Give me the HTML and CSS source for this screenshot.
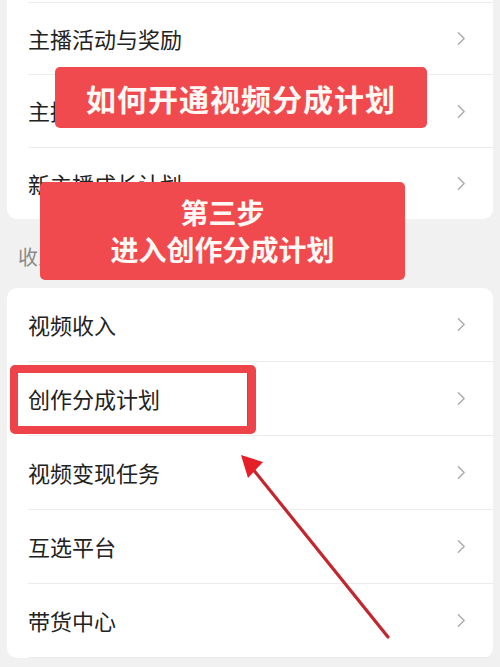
FILE: index.html
```html
<!DOCTYPE html>
<html lang="zh">
<head>
<meta charset="utf-8">
<link rel="stylesheet" href="styles.css">
</head>
<body>
<div class="page">
  <div class="card card-top">
    <div class="row"><span class="label">主播活动与奖励</span><svg class="chev" viewBox="0 0 10 16"><polyline points="1.5,1.5 8,8 1.5,14.5"/></svg></div>
    <div class="row"><span class="label">主播中心</span><svg class="chev" viewBox="0 0 10 16"><polyline points="1.5,1.5 8,8 1.5,14.5"/></svg></div>
    <div class="row last"><span class="label">新主播成长计划</span><svg class="chev" viewBox="0 0 10 16"><polyline points="1.5,1.5 8,8 1.5,14.5"/></svg></div>
  </div>
  <div class="section">收入变现</div>
  <div class="card">
    <div class="row"><span class="label">视频收入</span><svg class="chev" viewBox="0 0 10 16"><polyline points="1.5,1.5 8,8 1.5,14.5"/></svg></div>
    <div class="row"><span class="label">创作分成计划</span><svg class="chev" viewBox="0 0 10 16"><polyline points="1.5,1.5 8,8 1.5,14.5"/></svg></div>
    <div class="row"><span class="label">视频变现任务</span><svg class="chev" viewBox="0 0 10 16"><polyline points="1.5,1.5 8,8 1.5,14.5"/></svg></div>
    <div class="row"><span class="label">互选平台</span><svg class="chev" viewBox="0 0 10 16"><polyline points="1.5,1.5 8,8 1.5,14.5"/></svg></div>
    <div class="row"><span class="label">带货中心</span><svg class="chev" viewBox="0 0 10 16"><polyline points="1.5,1.5 8,8 1.5,14.5"/></svg></div>
  </div>

  <div class="banner banner-title">如何开通视频分成计划</div>
  <div class="banner banner-step">第三步<br>进入创作分成计划</div>
  <div class="highlight"></div>
  <svg class="arrow" viewBox="0 0 500 667" width="500" height="667">
    <line x1="388" y1="637" x2="252" y2="468"/>
    <polygon points="241,455 263,462 248,478"/>
  </svg>
</div>
</body>
</html>
```
FILE: styles.css
```css
html, body {
  margin: 0;
  padding: 0;
}
body {
  background: #f1f1f1;
  font-family: "Noto Sans CJK SC", "Noto Sans", sans-serif;
}
.page {
  position: relative;
  width: 500px;
  height: 667px;
  overflow: hidden;
}
.card {
  margin: 0 7px;
  background: #fff;
  border-radius: 10px;
  padding-left: 21px;
}
.card-top {
  border-radius: 0 0 10px 10px;
  padding-top: 2px;
}
.card-top .row:first-child {
  border-top: 1px solid #ececec;
}
.row {
  height: 74px;
  box-sizing: border-box;
  display: flex;
  align-items: center;
  justify-content: space-between;
  padding-right: 27px;
  padding-bottom: 2px;
  border-bottom: 1px solid #ececec;
}
.card-top .row {
  height: 73px;
}
.card-top .row.last {
  border-bottom: 0;
  height: 71px;
}
.label {
  font-size: 22px;
  color: #222;
  line-height: 1;
}
.chev {
  width: 9px;
  height: 15px;
  margin-top: 2px;
}
.chev polyline {
  fill: none;
  stroke: #a9a9a9;
  stroke-width: 1.5;
  stroke-linecap: round;
  stroke-linejoin: round;
}
.section {
  height: 69px;
  display: flex;
  align-items: center;
  padding-left: 18px;
  font-size: 20px;
  color: #8a8a8a;
  padding-top: 6px;
  box-sizing: border-box;
}
.banner {
  position: absolute;
  background: #f14a4e;
  color: #fff8f4;
  font-weight: 700;
  text-align: center;
  border-radius: 5px;
  display: flex;
  align-items: center;
  justify-content: center;
}
.banner-title {
  left: 55px;
  top: 67px;
  width: 372px;
  height: 61px;
  font-size: 30px;
  letter-spacing: 1px;
}
.banner-step {
  left: 40px;
  top: 182px;
  width: 365px;
  height: 98px;
  font-size: 28px;
  line-height: 37px;
}
.highlight {
  position: absolute;
  left: 10px;
  top: 365px;
  width: 230px;
  height: 53px;
  border: 8px solid #ee4449;
  border-radius: 5px;
  box-shadow: inset -1px 0 0 #9b3fc0;
}
.arrow {
  position: absolute;
  left: 0;
  top: 0;
}
.arrow line {
  stroke: #c3262c;
  stroke-width: 3.2;
  stroke-linecap: round;
}
.arrow polygon {
  fill: #e61e28;
}
```
